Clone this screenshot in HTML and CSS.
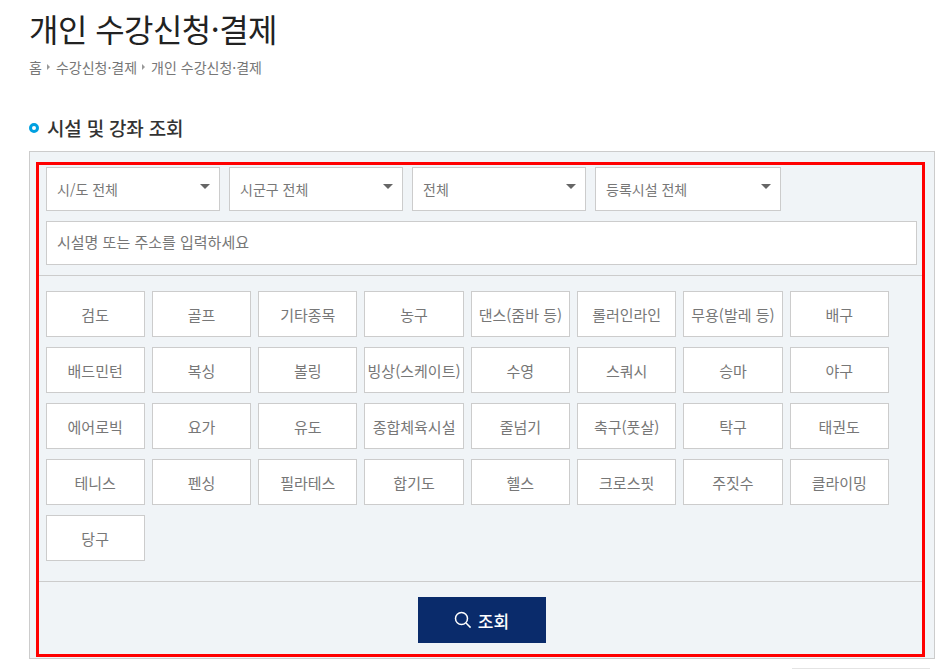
FILE: index.html
```html
<!DOCTYPE html>
<html lang="ko">
<head>
<meta charset="utf-8">
<title>개인 수강신청·결제</title>
<link rel="stylesheet" href="styles.css">
</head>
<body>
<main class="page">
  <h1 class="title">개인 수강신청·결제</h1>
  <nav class="crumbs">
    <span>홈</span><i class="crumb-arrow"></i><span>수강신청·결제</span><i class="crumb-arrow"></i><span>개인 수강신청·결제</span>
  </nav>
  <h2 class="section-title"><i class="ring"></i>시설 및 강좌 조회</h2>
  <section class="panel">
    <form class="search">
      <div class="filters">
        <div class="select"><span>시/도 전체</span><i class="caret"></i></div>
        <div class="select"><span>시군구 전체</span><i class="caret"></i></div>
        <div class="select"><span>전체</span><i class="caret"></i></div>
        <div class="select select-wide"><span>등록시설 전체</span><i class="caret"></i></div>
        <div class="text-input">시설명 또는 주소를 입력하세요</div>
      </div>
      <div class="tags">
        <div class="tag">검도</div><div class="tag">골프</div><div class="tag">기타종목</div><div class="tag">농구</div><div class="tag">댄스(줌바 등)</div><div class="tag">롤러인라인</div><div class="tag">무용(발레 등)</div><div class="tag">배구</div>
        <div class="tag">배드민턴</div><div class="tag">복싱</div><div class="tag">볼링</div><div class="tag">빙상(스케이트)</div><div class="tag">수영</div><div class="tag">스쿼시</div><div class="tag">승마</div><div class="tag">야구</div>
        <div class="tag">에어로빅</div><div class="tag">요가</div><div class="tag">유도</div><div class="tag">종합체육시설</div><div class="tag">줄넘기</div><div class="tag">축구(풋살)</div><div class="tag">탁구</div><div class="tag">태권도</div>
        <div class="tag">테니스</div><div class="tag">펜싱</div><div class="tag">필라테스</div><div class="tag">합기도</div><div class="tag">헬스</div><div class="tag">크로스핏</div><div class="tag">주짓수</div><div class="tag">클라이밍</div>
        <div class="tag">당구</div>
      </div>
      <div class="actions">
        <button type="button" class="submit">
          <svg class="search-icon" width="18" height="18" viewBox="0 0 18 18" fill="none" stroke="#fff" stroke-width="1.5"><circle cx="7.5" cy="7.5" r="6"/><path d="M12 12l4.6 4.6"/></svg>
          조회
        </button>
      </div>
    </form>
  </section>
  <div class="next-edge"></div>
</main>
</body>
</html>
```
FILE: styles.css
```css
* { box-sizing: border-box; }
html, body { margin: 0; padding: 0; background: #fff; overflow: hidden; }
body { font-family: "Noto Sans CJK KR", "Noto Sans", sans-serif; color: #666; }
.page { width: 906px; margin-left: 29px; height: 669px; }
.title { margin: 0; padding-top: 5px; height: 57px; font-size: 32px; line-height: 46px; font-weight: 400; color: #222; letter-spacing: -0.55px; }
.crumbs { display: flex; align-items: center; height: 20px; font-size: 14px; line-height: 20px; color: #777; letter-spacing: 0; }
.crumb-arrow { width: 0; height: 0; margin: 0 6px 0 5px; border-left: 3px solid #999; border-top: 3px solid transparent; border-bottom: 3px solid transparent; }
.section-title { display: flex; align-items: center; margin: 38px 0 0; height: 26px; font-size: 19px; line-height: 26px; font-weight: 500; color: #333; letter-spacing: -0.2px; }
.ring { width: 10px; height: 10px; margin-right: 8px; border: 3px solid #00a0e0; border-radius: 50%; background: #fff; }
.panel { margin-top: 10px; width: 906px; height: 508px; padding: 10px 9px 1px 6px; border: 1px solid #ccc; background: #f0f4f7; }
.search { height: 495px; border: 3px solid #f00; }
.filters { display: flex; flex-wrap: wrap; gap: 10px 9px; padding: 2px 5px 10px 7px; border-bottom: 1px solid #ccc; }
.select { position: relative; display: flex; align-items: center; width: 174px; height: 44px; padding-left: 10px; border: 1px solid #ccc; background: #fff; font-size: 14px; color: #777; }
.select-wide { width: 186px; }
.caret { position: absolute; top: 16px; right: 9px; width: 0; height: 0; border-top: 5px solid #666; border-left: 5px solid transparent; border-right: 5px solid transparent; }
.text-input { display: flex; align-items: center; width: 871px; height: 44px; padding: 0 0 4px 10px; border: 1px solid #ccc; background: #fff; font-size: 15px; color: #777; }
.tags { display: grid; grid-template-columns: repeat(8, 99.3px); gap: 10px 7px; padding: 15px 0 20px 6.5px; border-bottom: 1px solid #ccc; }
.tag { display: flex; align-items: center; justify-content: center; height: 46px; border: 1px solid #ccc; background: #fff; font-size: 15px; white-space: nowrap; color: #777; }
.actions { display: flex; justify-content: center; padding: 15px 0 0 2px; }
.submit { display: flex; align-items: center; justify-content: center; gap: 6px; width: 128px; height: 46px; padding: 0; border: 0; background: #0a2b6b; color: #fff; font: 500 17px "Noto Sans CJK KR", sans-serif; }
.next-edge { width: 138px; height: 2px; margin: 9px 0 0 763px; background: #e4e4e4; }
```
